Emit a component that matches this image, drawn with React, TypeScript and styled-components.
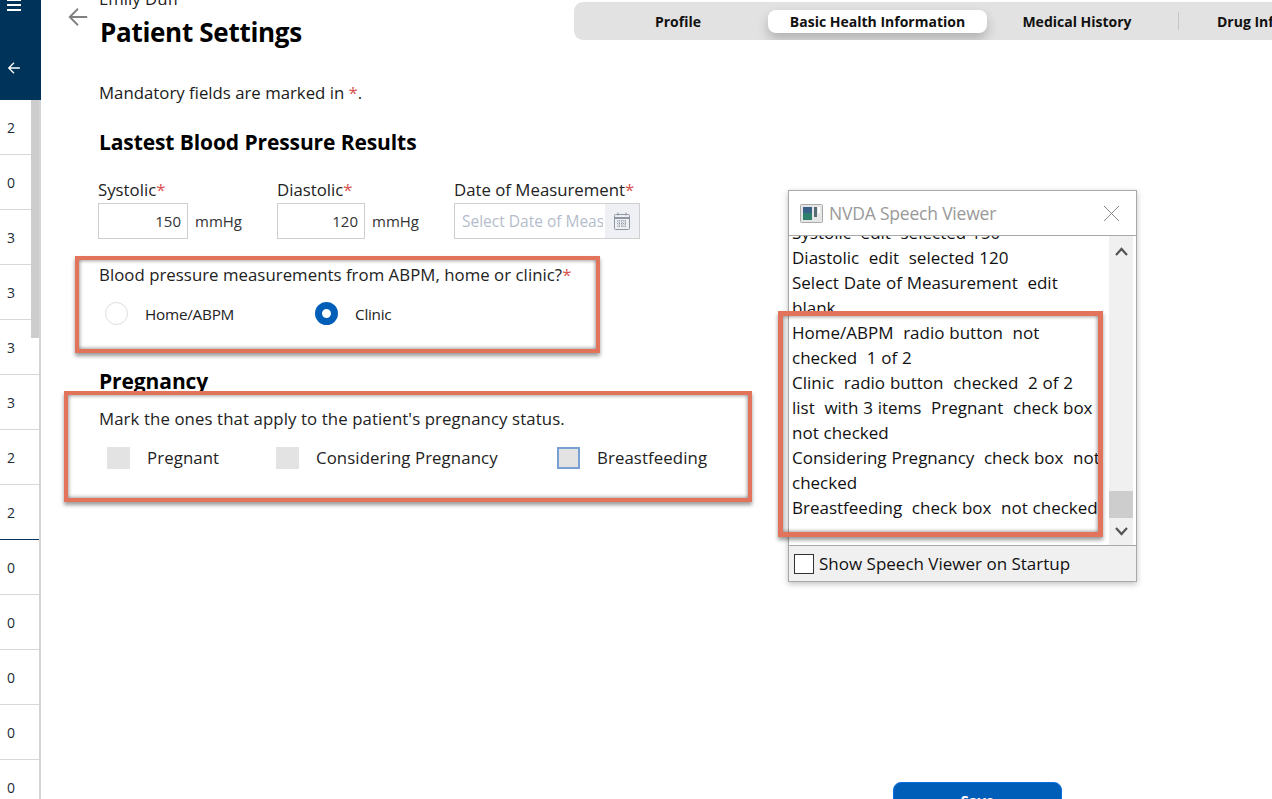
import React from "react";
import styled, { createGlobalStyle } from "styled-components";

const Global = createGlobalStyle`
  html, body { margin: 0; padding: 0; height: 799px; overflow: hidden; background: #fff; }
  body { font-family: "Open Sans", "Noto Sans", sans-serif; color: #000; }
  * { box-sizing: border-box; }
`;

const Page = styled.div`
  position: relative;
  display: flex;
  width: 1272px;
  height: 799px;
  overflow: hidden;
`;

const Side = styled.aside`
  flex: 0 0 41px;
  display: flex;
  flex-direction: column;
  border-right: 2px solid #d4d4d4;
`;
const SideHead = styled.div`
  flex: 0 0 100px;
  margin-right: -2px;
  padding-left: 7px;
  background: #003359;
  color: #fff;
  display: flex;
  flex-direction: column;
  align-items: flex-start;
`;
const MenuBars = styled.div`
  width: 14px;
  height: 12px;
  margin-top: -1px;
  border-top: 2px solid #fff;
  border-bottom: 2px solid #fff;
  position: relative;
  margin-bottom: 50px;
  &::before {
    content: "";
    position: absolute;
    left: 0;
    right: 0;
    top: 3px;
    height: 2px;
    background: #fff;
  }
`;
const SideRows = styled.div`
  position: relative;
  flex: 1;
`;
const SideRow = styled.div<{ $dark?: boolean }>`
  height: 55px;
  padding-left: 7px;
  display: flex;
  align-items: center;
  font-size: 14px;
  color: #1c2b36;
  border-bottom: 1px solid ${(p) => (p.$dark ? "#003359" : "#d8d8d8")};
`;
const SideThumb = styled.div`
  position: absolute;
  top: 0;
  right: 0;
  width: 8px;
  height: 238px;
  background: #cdcdcd;
`;

const Main = styled.main`
  flex: 1;
  min-width: 0;
  display: flex;
  flex-direction: column;
  padding-left: 26px;
`;
const Header = styled.header`
  display: flex;
  flex: none;
  height: 60px;
`;
const Back = styled.div`
  flex: 0 0 32px;
  padding-top: 6px;
  color: #808080;
`;
const TitleBlock = styled.div`
  flex: 0 0 475px;
`;
const Patient = styled.div`
  font-size: 16.8px;
  line-height: 20px;
  margin-top: -11px;
  color: #222;
`;
const Title = styled.h1`
  margin: 6px 0 0 1px;
  font-size: 26px;
  line-height: 34px;
  font-weight: 700;
  letter-spacing: -0.3px;
`;
const Tabs = styled.nav`
  flex: none;
  display: flex;
  align-items: center;
  width: 760px;
  height: 38px;
  margin-top: 2px;
  background: #e2e2e2;
  border-radius: 9px;
  overflow: hidden;
`;
const Tab = styled.div<{ $w: number; $active?: boolean; $trail?: number }>`
  flex: 0 0 ${(p) => p.$w}px;
  height: 23px;
  padding-right: ${(p) => p.$trail ?? 0}px;
  display: flex;
  align-items: center;
  justify-content: center;
  font-size: 14px;
  font-weight: 700;
  white-space: nowrap;
  color: #111;
  border-radius: 8px;
  background: ${(p) => (p.$active ? "#fff" : "transparent")};
  box-shadow: ${(p) => (p.$active ? "0 6px 12px rgba(0,0,0,.22)" : "none")};
`;
const TabLead = styled.div`
  flex: 0 0 194px;
  display: flex;
  align-items: center;
  justify-content: center;
  padding-left: 14px;
  font-size: 14px;
  font-weight: 700;
  color: #111;
`;
const TabDivider = styled.div`
  flex: 0 0 1px;
  height: 18px;
  background: #c6c6c6;
`;
const TabDrug = styled.div`
  flex: 0 0 auto;
  padding-left: 38px;
  font-size: 14px;
  font-weight: 700;
  white-space: nowrap;
  color: #111;
`;

const Form = styled.div`
  padding-left: 32px;
  display: flex;
  flex-direction: column;
  flex: 1;
  min-height: 0;
`;
const Note = styled.p`
  margin: 21px 0 0;
  font-size: 16.8px;
  line-height: 24px;
  color: #1a1a1a;
`;
const Req = styled.span`
  color: #d9534f;
`;
const Heading = styled.h2`
  margin: 0;
  font-size: 21px;
  line-height: 28px;
  font-weight: 700;
  letter-spacing: -0.1px;
`;
const BPHeading = styled(Heading)`
  margin-top: 23px;
`;
const Fields = styled.div`
  display: flex;
  margin: 23px 0 0 -1px;
`;
const Field = styled.div<{ $w: number }>`
  flex: 0 0 ${(p) => p.$w}px;
`;
const Label = styled.div`
  font-size: 16.8px;
  line-height: 22px;
  color: #222;
  white-space: nowrap;
`;
const InputRow = styled.div`
  display: flex;
  align-items: center;
  margin-top: 2px;
`;
const NumberInput = styled.div<{ $w: number }>`
  width: ${(p) => p.$w}px;
  height: 36px;
  border: 1px solid #cfcfcf;
  padding-right: 6px;
  text-align: right;
  font-size: 15px;
  line-height: 34px;
  color: #333;
`;
const Unit = styled.span`
  margin-left: 7px;
  font-size: 15px;
  color: #333;
`;
const DateInput = styled.div`
  display: flex;
  width: 186px;
  height: 36px;
  border: 1px solid #cfcfcf;
`;
const DatePlaceholder = styled.div`
  flex: 1;
  min-width: 0;
  overflow: hidden;
  padding-left: 7px;
  margin-right: 2px;
  white-space: nowrap;
  font-size: 15.5px;
  line-height: 34px;
  color: #b4bccb;
`;
const DateButton = styled.div`
  flex: 0 0 34px;
  display: flex;
  align-items: center;
  justify-content: center;
  background: #eef0f3;
`;

const Callout = styled.section<{ $left: number; $pad: number }>`
  flex: none;
  margin-left: -${(p) => p.$left}px;
  padding: ${(p) => p.$pad}px 0 0 ${(p) => p.$left - 4}px;
  border: 4px solid #e1745b;
  box-shadow: 0 3px 4px rgba(0, 0, 0, 0.4), inset 0 0 4px rgba(0, 0, 0, 0.55);
`;
const RadioCallout = styled(Callout)`
  width: 525px;
  height: 97px;
  margin-top: 17px;
`;
const PregCallout = styled(Callout)`
  width: 688px;
  height: 111px;
`;
const Question = styled.div`
  font-size: 16.8px;
  line-height: 22px;
  letter-spacing: 0.04px;
  color: #222;
  white-space: nowrap;
`;
const PregQuestion = styled(Question)`
  letter-spacing: 0.1px;
`;
const Options = styled.div`
  display: flex;
  align-items: center;
`;
const RadioOptions = styled(Options)`
  margin-top: 16px;
  padding-left: 6px;
`;
const CheckOptions = styled(Options)`
  margin-top: 16px;
  padding-left: 8px;
`;
const Option = styled.div<{ $w: number }>`
  flex: 0 0 ${(p) => p.$w}px;
  display: flex;
  align-items: center;
`;
const RadioText = styled.span`
  margin-left: 17px;
  font-size: 15.3px;
  letter-spacing: -0.25px;
  color: #222;
  white-space: nowrap;
`;
const CheckText = styled.span`
  margin-left: 17px;
  font-size: 16.8px;
  letter-spacing: 0.1px;
  color: #222;
  white-space: nowrap;
`;
const Radio = styled.span<{ $on?: boolean }>`
  width: 23px;
  height: 23px;
  border-radius: 50%;
  border: ${(p) => (p.$on ? "7px solid #005eb8" : "1px solid #dedede")};
  background: #fff;
`;
const Check = styled.span<{ $focus?: boolean }>`
  width: 23px;
  height: 22px;
  background: #e3e3e3;
  border: ${(p) => (p.$focus ? "2px solid #78a0d2" : "none")};
`;
const PregHeading = styled(Heading)`
  margin-top: 14px;
  margin-bottom: -4px;
`;
const SaveBar = styled.div`
  margin-top: auto;
  margin-bottom: -20px;
  padding-left: 794px;
`;
const SaveButton = styled.button`
  display: block;
  width: 169px;
  height: 37px;
  border: 1px solid #0a6fe0;
  border-radius: 8px;
  background: #005eb8;
  color: #fff;
  font: 700 14.5px "Open Sans", sans-serif;
  padding: 0;
`;

const Viewer = styled.div`
  position: absolute;
  left: 788px;
  top: 190px;
  width: 349px;
  height: 392px;
  background: #f0f0f0;
  border: 1px solid #a8a8a8;
  box-shadow: 0 2px 6px rgba(0, 0, 0, 0.25);
  display: flex;
  flex-direction: column;
`;
const ViewerTitle = styled.div`
  flex: 0 0 45px;
  background: #fff;
  display: flex;
  align-items: center;
  padding: 0 16px 0 11px;
  border-bottom: 1px solid #a8a8a8;
`;
const ViewerName = styled.span`
  flex: 1;
  margin-left: 6px;
  font-size: 17.5px;
  letter-spacing: -0.2px;
  color: #999;
`;
const ViewerBody = styled.div`
  flex: 0 0 310px;
  display: flex;
  background: #fff;
  border-bottom: 1px solid #a8a8a8;
  overflow: hidden;
`;
const LogText = styled.div`
  flex: 1;
  min-width: 0;
  padding-left: 3px;
  margin-top: -16px;
  font-size: 17px;
  line-height: 25px;
  word-spacing: 0.4px;
  color: #111;
  overflow: hidden;
`;
const LogLine = styled.div`
  white-space: pre;
`;
const ScrollTrack = styled.div`
  flex: 0 0 24px;
  margin-right: 3px;
  display: flex;
  flex-direction: column;
  align-items: center;
  background: #f0f0f0;
  position: relative;
  justify-content: space-between;
  padding: 11px 0 9px;
`;
const ScrollThumb = styled.div`
  position: absolute;
  left: 0;
  right: 0;
  top: 255px;
  height: 27px;
  background: #cdcdcd;
`;
const ViewerFoot = styled.div`
  flex: 1;
  display: flex;
  align-items: center;
  padding-left: 5px;
`;
const ViewerBox = styled.span`
  width: 20px;
  height: 20px;
  border: 1px solid #333;
  background: #fff;
`;
const ViewerFootText = styled.span`
  margin-left: 5px;
  font-size: 17px;
  color: #111;
`;
const LogCallout = styled.div`
  position: absolute;
  left: 778px;
  top: 311px;
  width: 325px;
  height: 226px;
  border: 5px solid #e1745b;
  box-shadow: 0 3px 4px rgba(0, 0, 0, 0.4), inset 0 0 4px rgba(0, 0, 0, 0.55);
`;

const Arrow = ({ size, w }: { size: number; w: number }) => (
  <svg width={size} height={size} viewBox="0 0 24 24" fill="none" stroke="currentColor" strokeWidth={w}>
    <path d="M22 12H3M12 3l-9 9 9 9" />
  </svg>
);

const Calendar = () => (
  <svg width="16" height="18" viewBox="0 0 16 18" fill="none" stroke="#8f96a3" strokeWidth="1">
    <rect x="0.5" y="2.5" width="15" height="15" rx="1" />
    <path d="M0.5 6h15" strokeWidth="2" />
    <path d="M4 0.5v3M12 0.5v3" />
    <path d="M3 9h10M3 11.5h10M3 14h10M5 8v8M8 8v8M11 8v8" strokeDasharray="1 1" />
  </svg>
);

const ViewerIcon = () => (
  <svg width="23" height="19" viewBox="0 0 23 19">
    <rect x="0.5" y="0.5" width="22" height="18" rx="1" fill="#e6e6e6" stroke="#a9a9a9" />
    <rect x="3" y="3" width="9" height="13" fill="#2f7f6d" />
    <rect x="3" y="3" width="9" height="6" fill="#3a5f88" />
    <rect x="14" y="3" width="3" height="10" fill="#5a6b78" />
    <rect x="18" y="3" width="2" height="6" fill="#fff" />
  </svg>
);

const Chevron = ({ up }: { up?: boolean }) => (
  <svg width="13" height="9" viewBox="0 0 13 9" fill="none" stroke="#555" strokeWidth="2.2">
    <path d={up ? "M1 8l5.5-6L12 8" : "M1 1l5.5 6L12 1"} />
  </svg>
);

const rows: { v: string; dark?: boolean }[] = [
  { v: "2" }, { v: "0" }, { v: "3" }, { v: "3" }, { v: "3" }, { v: "3" }, { v: "2" },
  { v: "2", dark: true }, { v: "0" }, { v: "0" }, { v: "0" }, { v: "0" }, { v: "0" },
];

const log = [
  "Systolic  edit  selected 150",
  "Diastolic  edit  selected 120",
  "Select Date of Measurement  edit",
  "blank",
  "Home/ABPM  radio button  not",
  "checked  1 of 2",
  "Clinic  radio button  checked  2 of 2",
  "list  with 3 items  Pregnant  check box",
  "not checked",
  "Considering Pregnancy  check box  not",
  "checked",
  "Breastfeeding  check box  not checked",
];

export default function App() {
  return (
    <Page>
      <Global />
      <Side>
        <SideHead>
          <MenuBars />
          <Arrow size={14} w={2.2} />
        </SideHead>
        <SideRows>
          {rows.map((r, i) => (
            <SideRow key={i} $dark={r.dark}>{r.v}</SideRow>
          ))}
          <SideThumb />
        </SideRows>
      </Side>
      <Main>
        <Header>
          <Back><Arrow size={22} w={2} /></Back>
          <TitleBlock>
            <Patient>Emily Duff</Patient>
            <Title>Patient Settings</Title>
          </TitleBlock>
          <Tabs>
            <TabLead>Profile</TabLead>
            <Tab $w={219} $active>Basic Health Information</Tab>
            <Tab $w={191} $trail={11}>Medical History</Tab>
            <TabDivider />
            <TabDrug>Drug Information</TabDrug>
          </Tabs>
        </Header>
        <Form>
          <Note>Mandatory fields are marked in <Req>*</Req>.</Note>
          <BPHeading>Lastest Blood Pressure Results</BPHeading>
          <Fields>
            <Field $w={179}>
              <Label>Systolic<Req>*</Req></Label>
              <InputRow><NumberInput $w={90}>150</NumberInput><Unit>mmHg</Unit></InputRow>
            </Field>
            <Field $w={177}>
              <Label>Diastolic<Req>*</Req></Label>
              <InputRow><NumberInput $w={88}>120</NumberInput><Unit>mmHg</Unit></InputRow>
            </Field>
            <Field $w={186}>
              <Label>Date of Measurement<Req>*</Req></Label>
              <InputRow>
                <DateInput>
                  <DatePlaceholder>Select Date of Measurement</DatePlaceholder>
                  <DateButton><Calendar /></DateButton>
                </DateInput>
              </InputRow>
            </Field>
          </Fields>
          <RadioCallout $left={24} $pad={4}>
            <Question>Blood pressure measurements from ABPM, home or clinic?<Req>*</Req></Question>
            <RadioOptions>
              <Option $w={210}><Radio /><RadioText>Home/ABPM</RadioText></Option>
              <Option $w={120}><Radio $on /><RadioText>Clinic</RadioText></Option>
            </RadioOptions>
          </RadioCallout>
          <PregHeading>Pregnancy</PregHeading>
          <PregCallout $left={35} $pad={13}>
            <PregQuestion>Mark the ones that apply to the patient's pregnancy status.</PregQuestion>
            <CheckOptions>
              <Option $w={169}><Check /><CheckText>Pregnant</CheckText></Option>
              <Option $w={281}><Check /><CheckText>Considering Pregnancy</CheckText></Option>
              <Option $w={180}><Check $focus /><CheckText>Breastfeeding</CheckText></Option>
            </CheckOptions>
          </PregCallout>
          <SaveBar><SaveButton>Save</SaveButton></SaveBar>
        </Form>
      </Main>
      <Viewer>
        <ViewerTitle>
          <ViewerIcon />
          <ViewerName>NVDA Speech Viewer</ViewerName>
          <svg width="17" height="17" viewBox="0 0 17 17" stroke="#8a8a8a" strokeWidth="1"><path d="M1 1l15 15M16 1L1 16" /></svg>
        </ViewerTitle>
        <ViewerBody>
          <LogText>
            {log.map((l, i) => <LogLine key={i}>{l}</LogLine>)}
          </LogText>
          <ScrollTrack>
            <Chevron up />
            <ScrollThumb />
            <Chevron />
          </ScrollTrack>
        </ViewerBody>
        <ViewerFoot>
          <ViewerBox />
          <ViewerFootText>Show Speech Viewer on Startup</ViewerFootText>
        </ViewerFoot>
      </Viewer>
      <LogCallout />
    </Page>
  );
}
